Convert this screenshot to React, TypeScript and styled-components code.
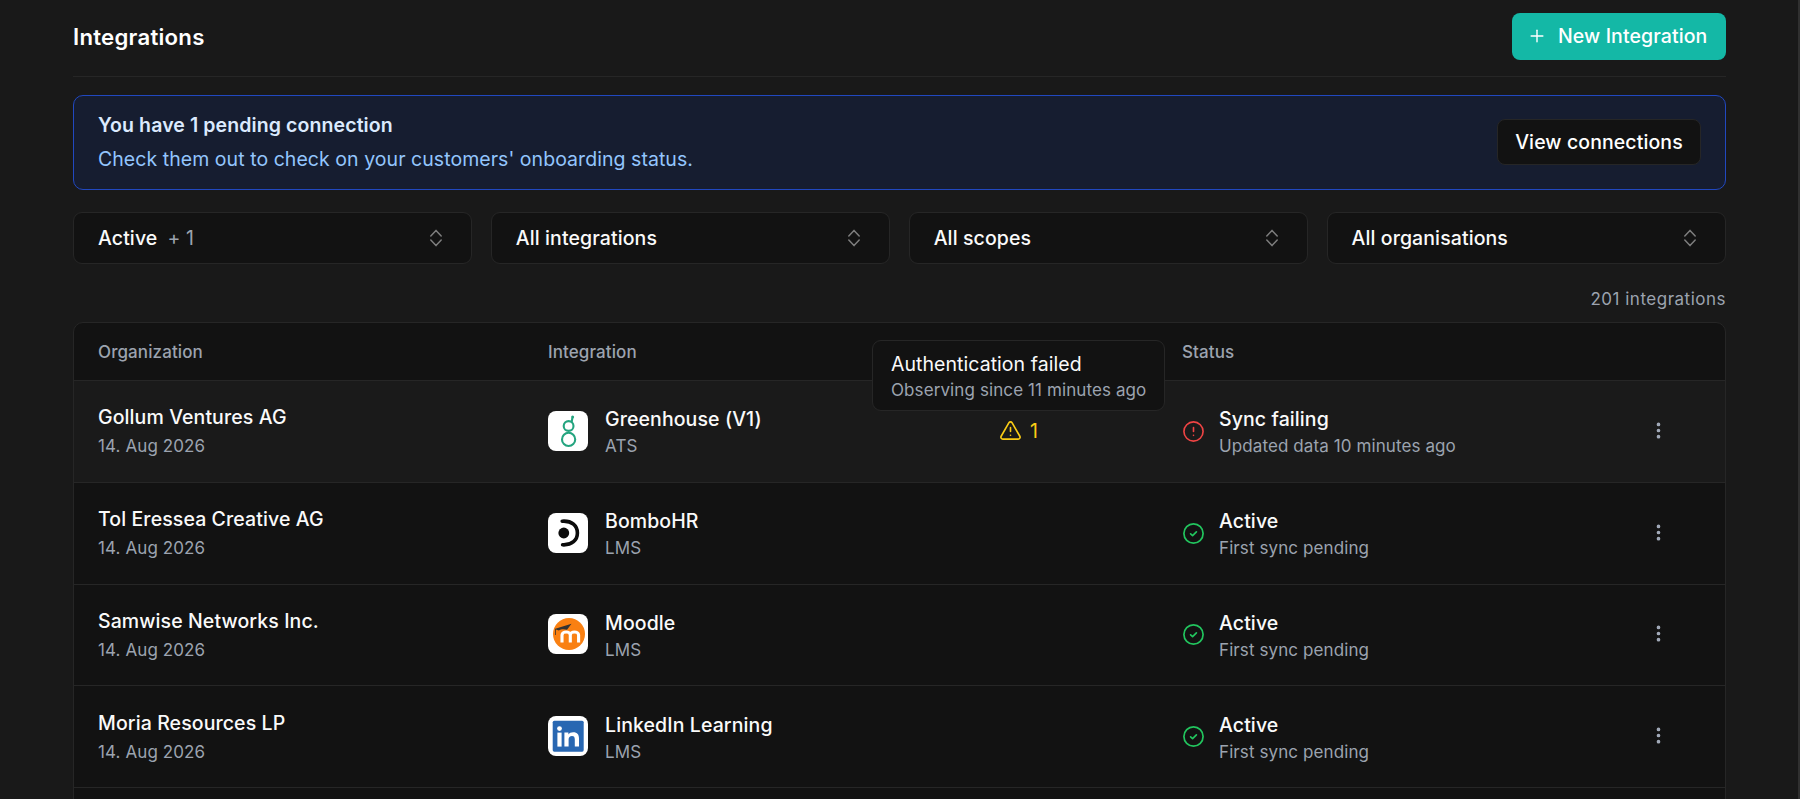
import { createGlobalStyle, css, styled } from "styled-components";
import { CircleAlert, EllipsisVertical, Plus, TriangleAlert } from "lucide-react";

const GlobalStyle = createGlobalStyle`
  * { box-sizing: border-box; }
  html, body { margin: 0; background: #191919; }
  body {
    font-family: Inter, "Liberation Sans", sans-serif;
    color: #fafafa;
    -webkit-font-smoothing: antialiased;
  }
`;

const ChevronsIcon = () => (
  <svg width="18" height="20" viewBox="0 0 18 20" fill="none" stroke="#7d7d7d" strokeWidth="1.5" strokeLinecap="round" strokeLinejoin="round">
    <path d="M3.8 8 L9 2.4 L14.2 8" />
    <path d="M3.8 12 L9 17.6 L14.2 12" />
  </svg>
);

const CheckIcon = () => (
  <svg width="23" height="23" viewBox="0 0 23 23" fill="none" stroke="#22c55e" strokeWidth="1.7" strokeLinecap="round" strokeLinejoin="round">
    <circle cx="11.5" cy="11.5" r="9.6" />
    <path d="M8.6 11.8 L10.6 13.6 L14.4 9.8" />
  </svg>
);

const GreenhouseLogo = () => (
  <svg width="40" height="40" viewBox="0 0 40 40" fill="none" stroke="#24a47f" strokeWidth="2.1">
    <circle cx="20.6" cy="28.4" r="6.6" />
    <circle cx="20.6" cy="15" r="4.9" />
    <path d="M23.6 11 L24.4 7" />
    <circle cx="24.6" cy="6" r="1.5" fill="#24a47f" stroke="none" />
  </svg>
);

const BomboLogo = () => (
  <svg width="40" height="40" viewBox="0 0 40 40" fill="none" stroke="#0b0b0b">
    <circle cx="15.8" cy="20" r="5.4" fill="#0b0b0b" stroke="none" />
    <path d="M14.2 8.2 C24 7.5 29.4 13 29.4 20 C29.4 27 24 32.3 14.6 31.8" strokeWidth="3.6" strokeLinecap="round" />
  </svg>
);

const MoodleLogo = () => (
  <svg width="40" height="40" viewBox="0 0 40 40">
    <circle cx="21" cy="20" r="16" fill="#f98012" />
    <path d="M14 28.5 V21 C14 17 22.3 17 22.3 21 V28.5 M22.3 21 C22.3 17 30.6 17 30.6 21 V28.5" fill="none" stroke="#fff" strokeWidth="3.1" />
    <path d="M6.5 15 L23.5 9.8 L19 15.8 C16 14.8 13 15 10.8 16.6 Z" fill="#333" />
    <path d="M7.5 15 V21" stroke="#333" strokeWidth="0.8" fill="none" />
  </svg>
);

const LinkedinLogo = () => (
  <svg width="40" height="40" viewBox="0 0 40 40">
    <rect x="4.7" y="4.7" width="31" height="31" rx="1.6" fill="#2867b2" />
    <circle cx="11.5" cy="12.6" r="2.4" fill="#fff" />
    <rect x="9.4" y="16.6" width="4.2" height="14" fill="#fff" />
    <path d="M16.4 16.6 H20.4 V18.6 C21.4 17 23 16.2 25.2 16.2 C29.4 16.2 31 18.6 31 22.6 V30.6 H26.8 V23.4 C26.8 21.2 26 20 24 20 C21.8 20 20.6 21.4 20.6 23.6 V30.6 H16.4 Z" fill="#fff" />
  </svg>
);

const rows = [
  { org: "Gollum Ventures AG", logo: <GreenhouseLogo />, name: "Greenhouse (V1)", kind: "ATS", failing: true, status: "Sync failing", note: "Updated data 10 minutes ago" },
  { org: "Tol Eressea Creative AG", logo: <BomboLogo />, name: "BomboHR", kind: "LMS", failing: false, status: "Active", note: "First sync pending" },
  { org: "Samwise Networks Inc.", logo: <MoodleLogo />, name: "Moodle", kind: "LMS", failing: false, status: "Active", note: "First sync pending" },
  { org: "Moria Resources LP", logo: <LinkedinLogo />, name: "LinkedIn Learning", kind: "LMS", failing: false, status: "Active", note: "First sync pending" },
];

export default function App() {
  return (
    <Page>
      <GlobalStyle />
      <Header>
        <Title>Integrations</Title>
        <PrimaryButton>
          <Plus size={20} strokeWidth={1.7} />
          New Integration
        </PrimaryButton>
      </Header>
      <Banner>
        <div>
          <BannerTitle>You have 1 pending connection</BannerTitle>
          <BannerText>Check them out to check on your customers' onboarding status.</BannerText>
        </div>
        <BannerButton>View connections</BannerButton>
      </Banner>
      <Filters>
        <Filter>
          <span>Active<FilterExtra>+ 1</FilterExtra></span>
          <ChevronsIcon />
        </Filter>
        <Filter>
          <span>All integrations</span>
          <ChevronsIcon />
        </Filter>
        <Filter>
          <span>All scopes</span>
          <ChevronsIcon />
        </Filter>
        <Filter>
          <span>All organisations</span>
          <ChevronsIcon />
        </Filter>
      </Filters>
      <Count>201 integrations</Count>
      <Table>
        <HeadRow>
          <HeadCell>Organization</HeadCell>
          <HeadCell>Integration</HeadCell>
          <HeadCell />
          <HeadCell>Status</HeadCell>
          <HeadCell />
        </HeadRow>
        {rows.map((row) => (
          <Row key={row.org} $hover={row.failing}>
            <Cell>
              <Primary>{row.org}</Primary>
              <OrgDate>14. Aug 2026</OrgDate>
            </Cell>
            <LogoCell>
              <LogoTile>{row.logo}</LogoTile>
              <TextBlock>
                <Primary>{row.name}</Primary>
                <Secondary>{row.kind}</Secondary>
              </TextBlock>
            </LogoCell>
            <WarningCell>
              {row.failing && (
                <>
                  <Tooltip>
                    <TooltipTitle>Authentication failed</TooltipTitle>
                    <TooltipNote>Observing since 11 minutes ago</TooltipNote>
                  </Tooltip>
                  <TriangleAlert size={23} strokeWidth={1.7} />
                  <span>1</span>
                </>
              )}
            </WarningCell>
            <StatusCell>
              {row.failing ? <CircleAlert size={23} color="#ef4444" strokeWidth={1.7} /> : <CheckIcon />}
              <TextBlock>
                <Primary>{row.status}</Primary>
                <Secondary>{row.note}</Secondary>
              </TextBlock>
            </StatusCell>
            <ActionCell>
              <EllipsisVertical size={21} color="#a1a9b8" strokeWidth={2.2} />
            </ActionCell>
          </Row>
        ))}
        <Row $hover={false} />
      </Table>
    </Page>
  );
}

const mediumText = css`
  font-size: 19.5px;
  font-weight: 500;
  letter-spacing: 0.1px;
`;

const regularText = css`
  font-size: 19.5px;
  font-weight: 400;
  letter-spacing: 0.05px;
`;

const smallText = css`
  font-size: 17px;
  letter-spacing: 0.1px;
  color: #9ca3af;
`;

const Page = styled.div`
  height: 799px;
  overflow: hidden;
  padding: 13px 72px 0 73px;
  border-right: 2px solid #303030;
  background: #191919;
`;

const Header = styled.header`
  display: flex;
  align-items: center;
  justify-content: space-between;
  height: 64px;
  padding-bottom: 17px;
  border-bottom: 1px solid #262626;
`;

const Title = styled.h1`
  margin: 0;
  font-size: 22.2px;
  font-weight: 600;
  letter-spacing: 0.25px;
  color: #fff;
`;

const PrimaryButton = styled.button`
  display: flex;
  align-items: center;
  gap: 11px;
  height: 47px;
  width: 214px;
  padding: 0 15px;
  border: 0;
  border-radius: 8px;
  background: #14b8a6;
  color: #fff;
  font-family: inherit;
  ${mediumText}
`;

const Banner = styled.section`
  display: flex;
  align-items: center;
  justify-content: space-between;
  height: 95px;
  margin-top: 18px;
  padding: 0 24px 2px;
  border: 1px solid #2148c0;
  border-radius: 10px;
  background: #161d30;
`;

const BannerTitle = styled.div`
  ${mediumText}
  font-weight: 600;
  line-height: 28px;
  color: #dbeafe;
`;

const BannerText = styled.div`
  ${regularText}
  margin-top: 6px;
  line-height: 28px;
  color: #93c5fd;
`;

const BannerButton = styled.button`
  width: 204px;
  height: 46px;
  border: 1px solid #262626;
  border-radius: 8px;
  background: #121212;
  color: #fff;
  font-family: inherit;
  ${mediumText}
`;

const Filters = styled.div`
  display: grid;
  grid-template-columns: repeat(4, 1fr);
  gap: 18.4px;
  margin-top: 22px;
`;

const Filter = styled.div`
  ${mediumText}
  display: flex;
  align-items: center;
  justify-content: space-between;
  height: 52px;
  padding: 0 26px 0 24px;
  border: 1px solid #262626;
  border-radius: 9px;
  background: #121212;
`;

const FilterExtra = styled.span`
  margin-left: 10px;
  font-weight: 400;
  color: #9ca3af;
`;

const Count = styled.div`
  ${smallText}
  margin-top: 23px;
  text-align: right;
  letter-spacing: 0.5px;
  line-height: 24px;
`;

const Table = styled.div`
  margin-top: 11px;
  border: 1px solid #262626;
  border-radius: 10px;
  background: #121212;
`;

const HeadRow = styled.div`
  display: grid;
  grid-template-columns: 450px 451px 183px 1fr 134px;
  align-items: center;
  height: 57px;
`;

const HeadCell = styled.div`
  ${smallText}
  padding-left: 24px;
  font-weight: 500;
`;

const Row = styled.div<{ $hover: boolean }>`
  display: grid;
  grid-template-columns: 450px 451px 183px 1fr 134px;
  align-items: center;
  height: 101.8px;
  border-top: 1px solid #262626;
  background: ${(p) => (p.$hover ? "#1a1a1a" : "#121212")};
`;

const Cell = styled.div`
  padding-left: 24px;
`;

const TextBlock = styled.div`
  margin-top: 2px;
`;

const Primary = styled.div`
  ${mediumText}
  line-height: 26px;
  color: #fafafa;
`;

const Secondary = styled.div`
  ${smallText}
  margin-top: 2px;
  line-height: 24px;
`;

const OrgDate = styled(Secondary)`
  margin-top: 4px;
`;

const LogoCell = styled(Cell)`
  display: flex;
  align-items: center;
  gap: 17px;
`;

const LogoTile = styled.div`
  width: 40px;
  height: 40px;
  margin-bottom: 1px;
  border-radius: 8px;
  background: #fff;
`;

const WarningCell = styled(Cell)`
  position: relative;
  display: flex;
  align-items: center;
  gap: 8px;
  margin-bottom: 1px;
  font-size: 19.5px;
  color: #facc15;
`;

const Tooltip = styled.div`
  position: absolute;
  left: -103px;
  bottom: 32px;
  width: 293px;
  height: 71px;
  padding: 10px 18px;
  border: 1px solid #262626;
  border-radius: 9px;
  background: #121212;
  white-space: nowrap;
`;

const TooltipTitle = styled.div`
  ${regularText}
  line-height: 26px;
  color: #fafafa;
`;

const TooltipNote = styled.div`
  ${smallText}
  margin-top: 1px;
  line-height: 24px;
`;

const StatusCell = styled(Cell)`
  display: flex;
  align-items: center;
  gap: 14px;
`;

const ActionCell = styled.div`
  display: flex;
  justify-content: center;
  margin-bottom: 2px;
`;
